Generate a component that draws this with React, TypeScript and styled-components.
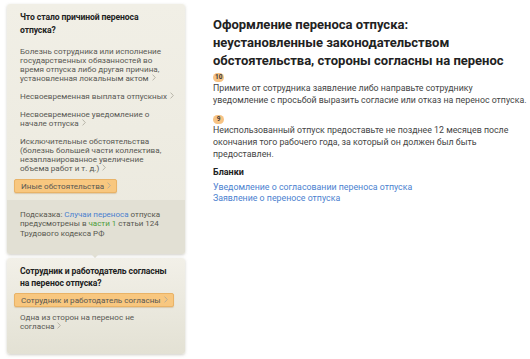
import { Fragment } from "react";
import styled, { createGlobalStyle } from "styled-components";

const GlobalStyle = createGlobalStyle`
  body {
    margin: 0;
    background: #ffffff;
    font-family: Roboto, "Liberation Sans", sans-serif;
  }
`;

type Option = { lines: string[]; selected?: boolean };

const reasons: Option[] = [
  {
    lines: [
      "Болезнь сотрудника или исполнение",
      "государственных обязанностей во",
      "время отпуска либо другая причина,",
      "установленная локальным актом",
    ],
  },
  { lines: ["Несвоевременная выплата отпускных"] },
  { lines: ["Несвоевременное уведомление о", "начале отпуска"] },
  {
    lines: [
      "Исключительные обстоятельства",
      "(болезнь большей части коллектива,",
      "незапланированное увеличение",
      "объема работ и т. д.)",
    ],
  },
  { lines: ["Иные обстоятельства"], selected: true },
];

const agreement: Option[] = [
  { lines: ["Сотрудник и работодатель согласны"], selected: true },
  { lines: ["Одна из сторон на перенос не", "согласна"] },
];

const Lines = ({ lines }: { lines: string[] }) => (
  <>
    {lines.map((l, i) => (
      <Fragment key={l}>
        {i > 0 && <br />}
        {l}
      </Fragment>
    ))}
  </>
);

const Chevron = () => (
  <ChevronIcon width="4" height="7" viewBox="0 0 4 7">
    <path d="M0.6 0.6 L3.3 3.5 L0.6 6.4" fill="none" stroke="#aaa79b" strokeWidth="0.8" />
  </ChevronIcon>
);

const Options = ({ items }: { items: Option[] }) => (
  <OptionList>
    {items.map((o) => (
      <OptionItem key={o.lines[0]} $selected={o.selected}>
        <Lines lines={o.lines} />
        <Chevron />
      </OptionItem>
    ))}
  </OptionList>
);

const App = () => (
  <>
    <GlobalStyle />
    <Page>
      <Sidebar>
        <Card>
          <CardBody>
            <Question>
              <Lines lines={["Что стало причиной переноса", "отпуска?"]} />
            </Question>
            <Options items={reasons} />
          </CardBody>
          <Hint>
            Подсказка: <BlueLink>Случаи переноса</BlueLink> отпуска
            <br />
            предусмотрены в <GreenLink>части 1</GreenLink> статьи 124
            <br />
            Трудового кодекса РФ
          </Hint>
        </Card>
        <Card $last>
          <CardBody $last>
            <Question $tight>
              <Lines lines={["Сотрудник и работодатель согласны", "на перенос отпуска?"]} />
            </Question>
            <Options items={agreement} />
          </CardBody>
        </Card>
      </Sidebar>
      <Content>
        <Heading>
          Оформление переноса отпуска: неустановленные законодательством
          обстоятельства, стороны согласны на перенос
        </Heading>
        <Step>
          <Badge>10</Badge>
          <StepText>
            Примите от сотрудника заявление либо направьте сотруднику
            уведомление с просьбой выразить согласие или отказ на перенос отпуска.
          </StepText>
        </Step>
        <Step>
          <Badge>9</Badge>
          <StepText>
            Неиспользованный отпуск предоставьте не позднее 12 месяцев после
            окончания того рабочего года, за который он должен был быть
            предоставлен.
          </StepText>
        </Step>
        <FormsTitle>Бланки</FormsTitle>
        <FormLinks>
          <FormLink>Уведомление о согласовании переноса отпуска</FormLink>
          <FormLink>Заявление о переносе отпуска</FormLink>
        </FormLinks>
      </Content>
    </Page>
  </>
);

const Page = styled.div`
  display: flex;
  align-items: flex-start;
  padding: 4px 0 0 7px;
  width: 530px;
  height: 359px;
  box-sizing: border-box;
  overflow: hidden;
`;

const Sidebar = styled.div`
  width: 178px;
  flex-shrink: 0;
  display: flex;
  flex-direction: column;
  gap: 4px;
`;

const Card = styled.div<{ $last?: boolean }>`
  position: relative;
  border-radius: 3px;
  background: ${(p) =>
    p.$last
      ? "linear-gradient(#f2f0e8, #e3e1d4)"
      : "linear-gradient(#f1efe6, #ebe9de)"};
  box-shadow: 0 1px 3px rgba(120, 115, 95, 0.35);
`;

const CardBody = styled.div<{ $last?: boolean }>`
  padding: 7px 4px ${(p) => (p.$last ? "23px" : "11px")} 13px;
`;

const Question = styled.div<{ $tight?: boolean }>`
  white-space: nowrap;
  font-size: 8.6px;
  font-weight: 700;
  letter-spacing: -0.1px;
  line-height: ${(p) => (p.$tight ? "12px" : "13px")};
  color: #222;
  margin-bottom: ${(p) => (p.$tight ? "8px" : "10px")};
`;

const OptionList = styled.div`
  display: flex;
  flex-direction: column;
  align-items: flex-start;
  gap: 9px;
`;

const OptionItem = styled.div<{ $selected?: boolean }>`
  white-space: nowrap;
  font-size: 8.1px;
  line-height: 9px;
  color: #585853;
  ${(p) =>
    p.$selected
      ? `
    margin: -3.5px 0 -3.5px -6px;
    padding: 2px 5px 1px 6px;
    background: #f8c77f;
    border: 1px solid #e9b367;
    border-radius: 2px;
    box-shadow: 0 1px 1px rgba(180, 130, 60, 0.3);
  `
      : ""}
`;

const ChevronIcon = styled.svg`
  margin-left: 3px;
  vertical-align: 0;
`;

const Hint = styled.div`
  position: relative;
  background: #e2e0d4;
  border-radius: 0 0 3px 3px;
  padding: 9.5px 6px 15.5px 13px;
  white-space: nowrap;
  font-size: 8px;
  line-height: 9.5px;
  color: #57574f;

  &::after {
    content: "";
    position: absolute;
    left: 84px;
    bottom: -4px;
    border-left: 4px solid transparent;
    border-right: 4px solid transparent;
    border-top: 4px solid #e2e0d4;
  }
`;

const BlueLink = styled.span`
  color: #4b7fcf;
`;

const GreenLink = styled.span`
  color: #4d9c3a;
`;

const Content = styled.div`
  flex: 1;
  margin-left: 28px;
  padding-top: 12px;
  display: flex;
  flex-direction: column;
  align-items: flex-start;
`;

const Heading = styled.h1`
  margin: 0 0 3px;
  font-size: 13px;
  font-weight: 700;
  line-height: 18px;
  color: #222;
  width: 300px;
`;

const Step = styled.div`
  display: flex;
  flex-direction: column;
  align-items: flex-start;
  margin-bottom: 9px;
`;

const Badge = styled.span`
  min-width: 7px;
  height: 9px;
  padding: 0 2px;
  border-radius: 5px;
  background: #f7c384;
  color: #3a3a3a;
  font-size: 6.5px;
  font-weight: 700;
  line-height: 9px;
  text-align: center;
`;

const StepText = styled.div`
  font-size: 8.8px;
  line-height: 12px;
  color: #444;
`;

const FormsTitle = styled.div`
  margin-top: -3px;
  font-size: 9px;
  font-weight: 700;
  color: #222;
  line-height: 12px;
`;

const FormLinks = styled.div`
  margin-top: 3.5px;
  display: flex;
  flex-direction: column;
`;

const FormLink = styled.a`
  font-size: 8.8px;
  line-height: 11px;
  color: #4b7fcf;
  cursor: pointer;
`;

export default App;
